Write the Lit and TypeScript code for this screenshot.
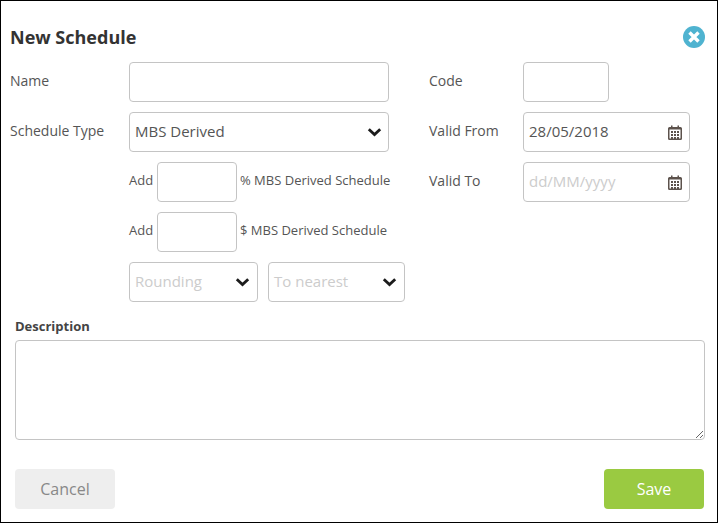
import { LitElement, html, css, svg } from "lit";
import { customElement } from "lit/decorators.js";

const chevron = html`<svg class="chev" width="15" height="10" viewBox="0 0 15 10"><path d="M1.8 2.2 L7.5 7.6 L13.2 2.2" fill="none" stroke="#1c1c1c" stroke-width="2.8"/></svg>`;

const dots = [0, 1, 2].flatMap((r) => [0, 1, 2].map((c) => svg`<rect x="${3 + c * 3}" y="${6 + r * 3}" width="2" height="2"/>`));
const calendar = html`<svg class="cal" width="14" height="15" viewBox="0 0 14 15" fill="#5c524c">
  <path fill-rule="evenodd" d="M1.5 2H12.5A1.5 1.5 0 0 1 14 3.5V13.5A1.5 1.5 0 0 1 12.5 15H1.5A1.5 1.5 0 0 1 0 13.5V3.5A1.5 1.5 0 0 1 1.5 2ZM1.5 4.5V13A.5.5 0 0 0 2 13.5H12A.5.5 0 0 0 12.5 13V4.5Z"/>
  <rect x="3" y="0.5" width="1.5" height="3"/><rect x="9.5" y="0.5" width="1.5" height="3"/>
  ${dots}
</svg>`;

@customElement("app-root")
export class AppRoot extends LitElement {
  static styles = css`
    :host {
      display: block;
      width: 718px;
      height: 523px;
      box-sizing: border-box;
      border: 1px solid #000;
      background: #fff;
      font-family: "Open Sans", sans-serif;
      color: #555;
      font-size: 14px;
    }
    .head {
      display: flex;
      align-items: center;
      justify-content: space-between;
      height: 61px;
      padding: 11px 12px 0 9px;
      box-sizing: border-box;
    }
    h1 {
      margin: 0;
      font-size: 18px;
      font-weight: 700;
      color: #333;
      line-height: 24px;
    }
    .close { display: block; }
    .top {
      display: flex;
      padding-left: 9px;
      height: 240px;
    }
    .left { width: 395px; display: flex; flex-direction: column; gap: 10px; }
    .right { margin-left: 24px; display: flex; flex-direction: column; gap: 10px; }
    .row { display: flex; align-items: center; height: 40px; }
    .lab { width: 119px; flex: none; padding-bottom: 3px; }
    .rlab { width: 94px; flex: none; padding-bottom: 3px; }
    .sub { margin-left: 119px; font-size: 13px; }
    .add { width: 28px; flex: none; padding-bottom: 4px; }
    .suffix { margin-left: 3px; white-space: nowrap; padding-bottom: 5px; }
    .field {
      box-sizing: border-box;
      height: 40px;
      display: flex;
      align-items: center;
      border: 1px solid #c4c4c4;
      border-radius: 4px;
      padding: 0 6px 0 5px;
      font-size: 15px;
      color: #555;
      background: #fff;
    }
    .field input {
      flex: 1;
      min-width: 0;
      width: 100%;
      border: 0;
      padding: 0 0 2px;
      outline: 0;
      background: none;
      font: inherit;
      color: inherit;
    }
    .field input::placeholder { color: #ccc; opacity: 1; }
    .field .val { flex: 1; min-width: 0; white-space: nowrap; padding-bottom: 2px; }
    .ph { color: #ccc; }
    .chev { flex: none; }
    .sm { padding-right: 7px; }
    .cal { flex: none; margin-right: 1px; }
    .w260 { width: 260px; }
    .w80 { width: 80px; }
    .w86 { width: 86px; }
    .w167 { width: 167px; }
    .w129 { width: 129px; }
    .w137 { width: 137px; margin-left: 10px; }
    .desc { padding: 0 12px 0 14px; }
    .desc label {
      display: block;
      font-size: 13px;
      font-weight: 700;
      color: #444;
      line-height: 17px;
      margin-top: 16px;
      margin-bottom: 5px;
    }
    textarea {
      display: block;
      box-sizing: border-box;
      width: 690px;
      height: 100px;
      border: 1px solid #c4c4c4;
      border-radius: 4px;
      outline: 0;
      padding: 6px;
      margin: 0;
      font: inherit;
      resize: both;
    }
    .foot {
      display: flex;
      justify-content: space-between;
      padding: 29px 13px 0 14px;
    }
    button {
      width: 100px;
      height: 40px;
      border: 0;
      border-radius: 4px;
      font-family: inherit;
      font-size: 16px;
      padding: 0 0 1px;
    }
    .cancel { background: #eee; color: #888; }
    .save { background: #9aca41; color: #fff; font-weight: 500; }
  `;

  render() {
    return html`
      <div class="head">
        <h1>New Schedule</h1>
        <svg class="close" width="22" height="22" viewBox="0 0 22 22">
          <circle cx="11" cy="11" r="11" fill="#4fb3d0"/>
          <path d="M6.5 6.5 L15.5 15.5 M15.5 6.5 L6.5 15.5" stroke="#fff" stroke-width="3.4" fill="none"/>
        </svg>
      </div>
      <div class="top">
        <div class="left">
          <div class="row"><span class="lab">Name</span><div class="field w260"><input /></div></div>
          <div class="row"><span class="lab">Schedule Type</span><div class="field w260"><span class="val">MBS Derived</span>${chevron}</div></div>
          <div class="row sub"><span class="add">Add</span><div class="field w80"><input /></div><span class="suffix">% MBS Derived Schedule</span></div>
          <div class="row sub"><span class="add">Add</span><div class="field w80"><input /></div><span class="suffix">$ MBS Derived Schedule</span></div>
          <div class="row sub">
            <div class="field w129 sm"><span class="val ph">Rounding</span>${chevron}</div>
            <div class="field w137 sm"><span class="val ph">To nearest</span>${chevron}</div>
          </div>
        </div>
        <div class="right">
          <div class="row"><span class="rlab">Code</span><div class="field w86"><input /></div></div>
          <div class="row"><span class="rlab">Valid From</span><div class="field w167"><input value="28/05/2018" />${calendar}</div></div>
          <div class="row"><span class="rlab">Valid To</span><div class="field w167"><input placeholder="dd/MM/yyyy" />${calendar}</div></div>
        </div>
      </div>
      <div class="desc">
        <label>Description</label>
        <textarea></textarea>
      </div>
      <div class="foot">
        <button class="cancel">Cancel</button>
        <button class="save">Save</button>
      </div>
    `;
  }
}
